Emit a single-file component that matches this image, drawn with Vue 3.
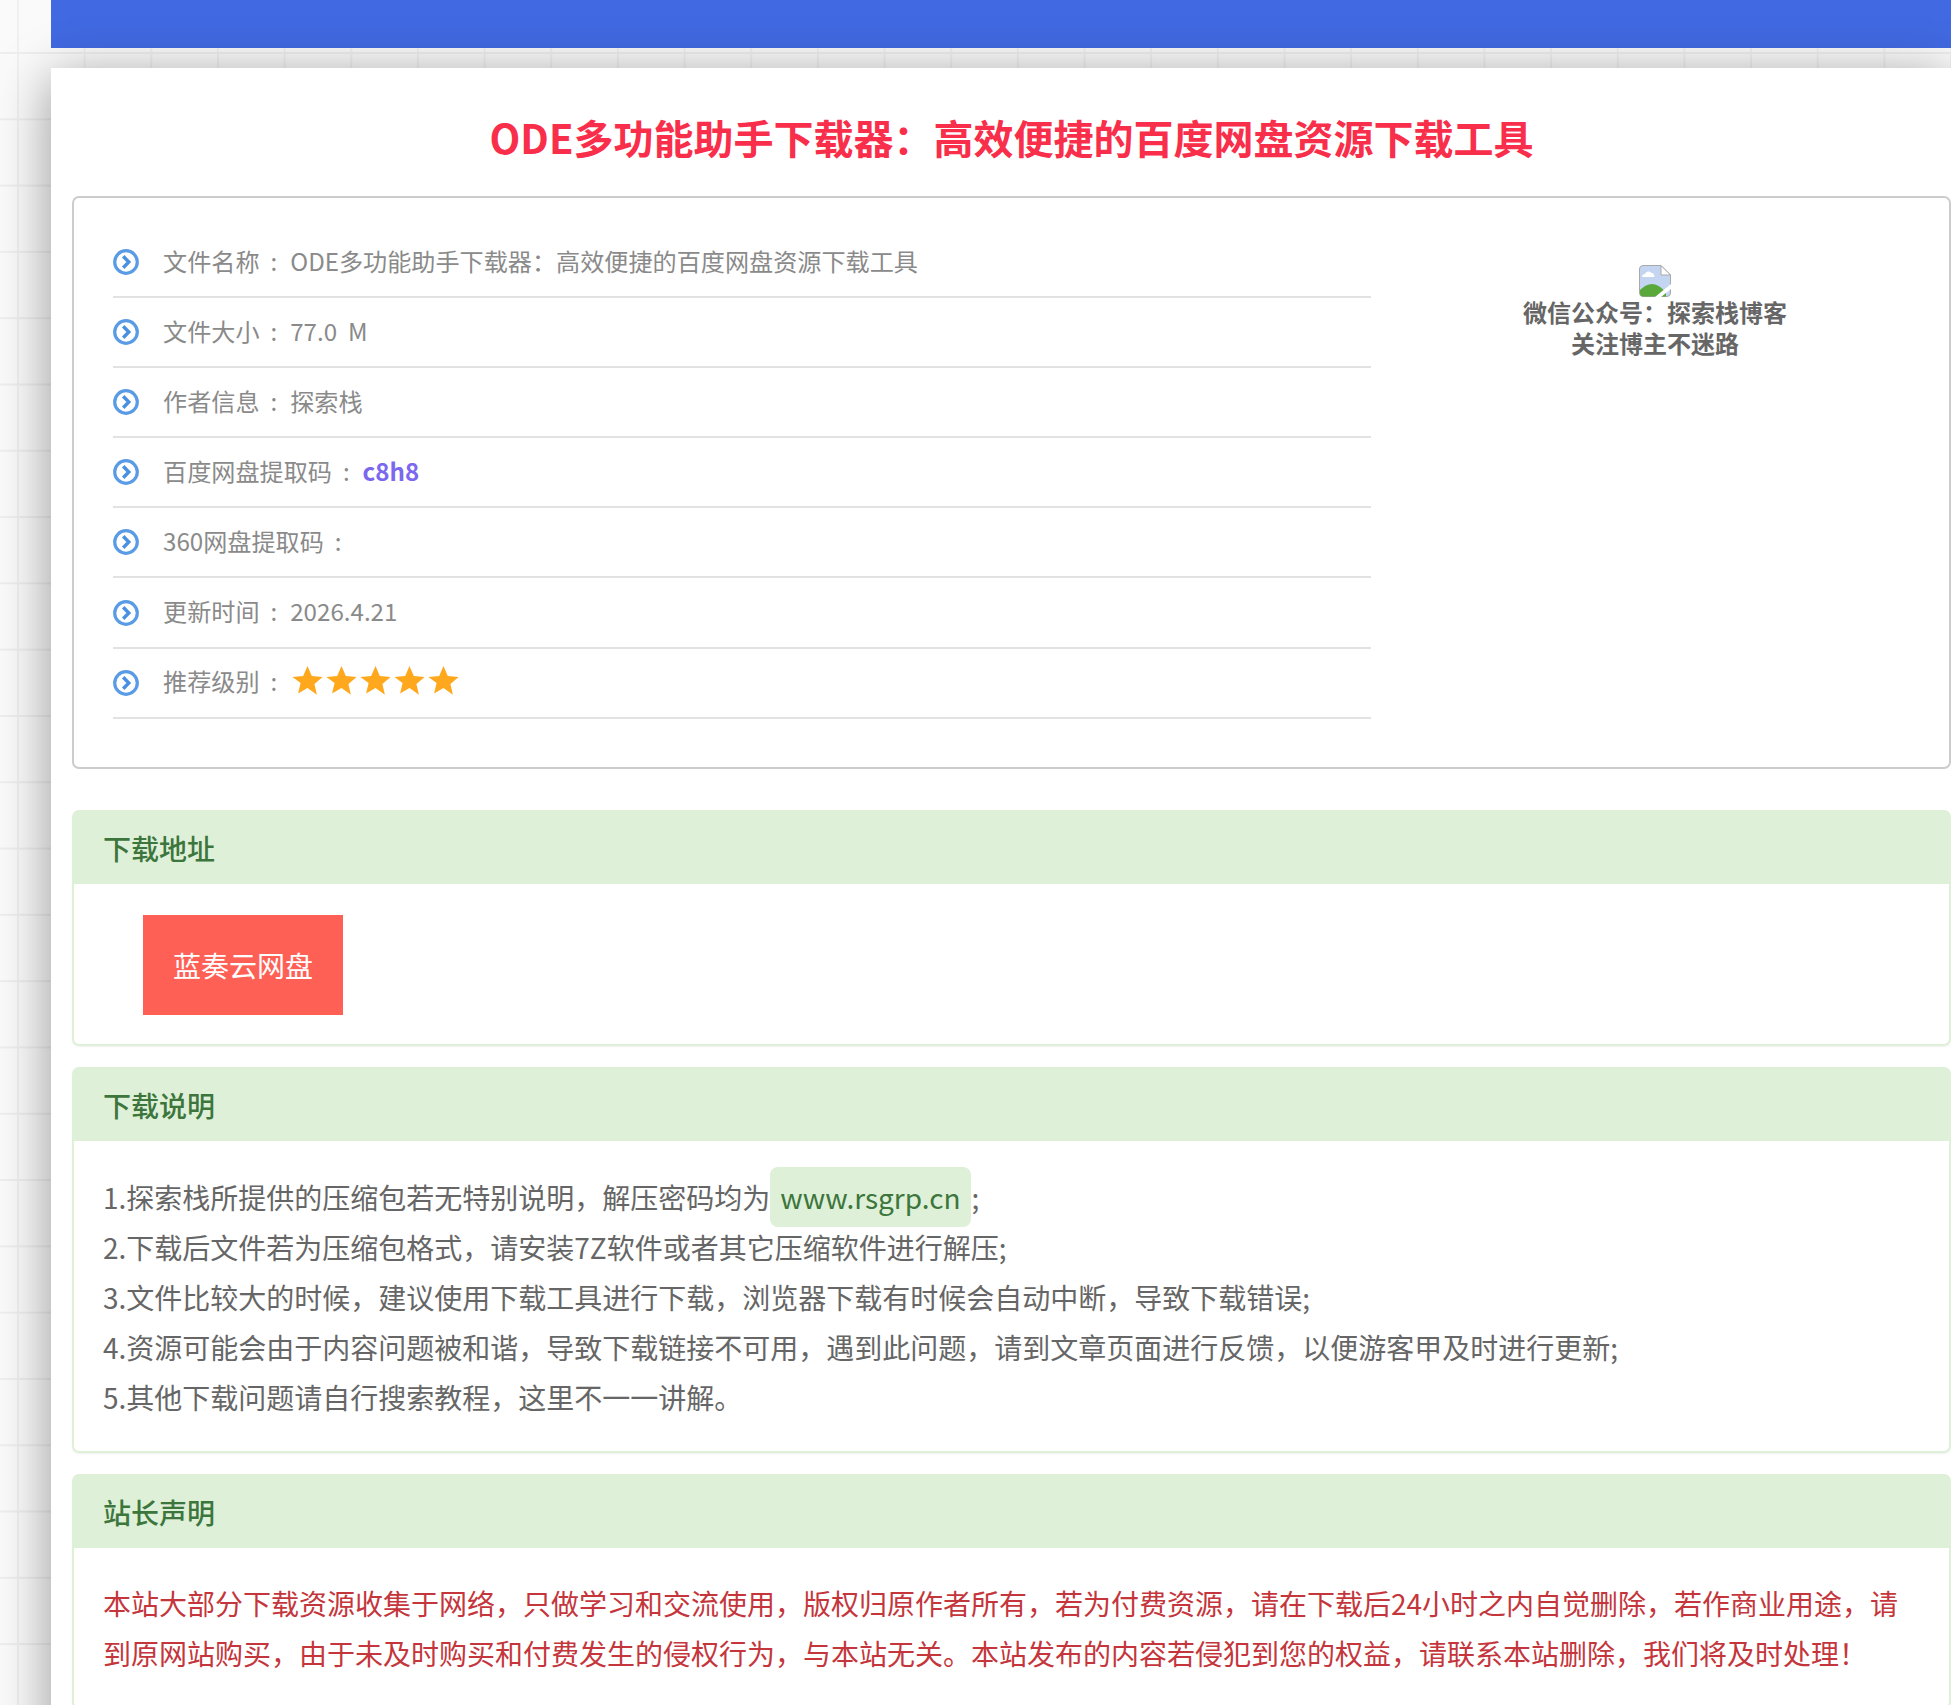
<template>
  <div class="page">
    <div class="topbar"></div>
    <div class="panel">
      <h1 class="title">{{ title }}</h1>

      <div class="info-card">
        <ul class="info-list">
          <li v-for="row in rows" :key="row.label" class="info-row">
            <svg class="row-icon" viewBox="0 0 26 26">
              <circle cx="13" cy="13" r="11.3" fill="none" stroke="#5a9be6" stroke-width="3.2" />
              <path d="M10.200 7.200 15.800 13l-5.600 5.800" fill="none" stroke="#4a90e2" stroke-width="3.4" />
            </svg>
            <span class="row-label">{{ row.label }}</span>
            <span class="row-colon">:</span>
            <span v-if="row.code" class="row-code">{{ row.code }}</span>
            <span v-else-if="row.stars" class="row-stars">
              <svg v-for="n in row.stars" :key="n" class="star" viewBox="0 0 30 30">
                <path d="M15 1l4.200 9.600 10.400 1-7.900 6.900 2.400 10.200L15 22.300 5.900 27.700l2.400-10.200L.4 11.600l10.400-1z" fill="#ffa81e" />
              </svg>
            </span>
            <span v-else class="row-value">{{ row.value }}</span>
          </li>
        </ul>
        <div class="qr-box">
          <svg class="broken-img" viewBox="0 0 32 32">
            <path d="M4 .5h18L31.500 10V28a3.500 3.500 0 0 1-3.500 3.500H4A3.500 3.500 0 0 1 .5 28V4A3.500 3.500 0 0 1 4 .5z" fill="#c3d5f0" stroke="#a9a9a9" />
            <path d="M22 .5V10h9.500z" fill="#fff" stroke="#a9a9a9" />
            <path d="M3 12c0-2 1.500-3 3-3 .8-3 5-3.500 6.500-1 2 0 3 1.800 3 4z" fill="#fff" />
            <path d="M1 28v-3c4-4 8-6 12-6s10 3 14 9v3.500H4A3 3 0 0 1 1 28z" fill="#5aa83c" />
            <path d="M16 32 32 19v5l-10 8z" fill="#fff" />
          </svg>
          <div class="qr-text">微信公众号：探索栈博客<br />关注博主不迷路</div>
        </div>
      </div>

      <section class="box box-first">
        <div class="box-head">下载地址</div>
        <div class="box-body btn-body">
          <a class="dl-btn">蓝奏云网盘</a>
        </div>
      </section>

      <section class="box">
        <div class="box-head">下载说明</div>
        <div class="box-body text-body">
          <div>1.探索栈所提供的压缩包若无特别说明，解压密码均为<span class="chip">www.rsgrp.cn</span>;</div>
          <div>2.下载后文件若为压缩包格式，请安装7Z软件或者其它压缩软件进行解压;</div>
          <div>3.文件比较大的时候，建议使用下载工具进行下载，浏览器下载有时候会自动中断，导致下载错误;</div>
          <div>4.资源可能会由于内容问题被和谐，导致下载链接不可用，遇到此问题，请到文章页面进行反馈，以便游客甲及时进行更新;</div>
          <div>5.其他下载问题请自行搜索教程，这里不一一讲解。</div>
        </div>
      </section>

      <section class="box">
        <div class="box-head">站长声明</div>
        <div class="box-body text-body notice">
          本站大部分下载资源收集于网络，只做学习和交流使用，版权归原作者所有，若为付费资源，请在下载后24小时之内自觉删除，若作商业用途，请到原网站购买，由于未及时购买和付费发生的侵权行为，与本站无关。本站发布的内容若侵犯到您的权益，请联系本站删除，我们将及时处理！
        </div>
      </section>
    </div>
  </div>
</template>

<script setup>
const title = 'ODE多功能助手下载器：高效便捷的百度网盘资源下载工具'

const rows = [
  { label: '文件名称', value: title },
  { label: '文件大小', value: '77.0\u00a0\u00a0M' },
  { label: '作者信息', value: '探索栈' },
  { label: '百度网盘提取码', code: 'c8h8' },
  { label: '360网盘提取码', value: '' },
  { label: '更新时间', value: '2026.4.21' },
  { label: '推荐级别', stars: 5 }
]
</script>

<style>
body { margin: 0; }
</style>

<style scoped>
.page {
  height: 1705px;
  overflow: hidden;
  padding-left: 51px;
  box-sizing: border-box;
  font-family: "Noto Sans CJK SC", "Noto Sans", sans-serif;
  background-color: #fafafa;
  background-image: linear-gradient(#eeeeee 2px, transparent 2px), linear-gradient(90deg, #f0f0f0 2px, transparent 2px);
  background-size: 66.67px 66.3px;
  background-position: 17px 52px;
}
.topbar { height: 48px; background: #4169e1; }
.panel {
  position: relative;
  margin-top: 20px;
  height: 1700px;
  padding-left: 21px;
  background: #fff;
  box-shadow: 0 10px 50px rgba(0, 0, 0, 0.4);
}
.title {
  margin: 0;
  height: 128px;
  box-sizing: border-box;
  font-size: 40px;
  line-height: 139px;
  font-weight: 700;
  text-align: center;
  color: #f82e4a;
}
.info-card {
  display: flex;
  height: 573px;
  box-sizing: border-box;
  padding: 30px 10px 0 39px;
  border: 2px solid #ccc;
  border-radius: 7px;
}
.info-list { width: 1258px; margin: 0; padding: 0; list-style: none; }
.info-row {
  display: flex;
  align-items: center;
  height: 70.1px;
  box-sizing: border-box;
  border-bottom: 2px solid #e2e2e2;
  font-size: 24.13px;
  color: #8a8a8a;
}
.row-icon { width: 26px; height: 26px; margin-right: 24px; flex: none; }
.row-label, .row-colon, .row-code, .row-value { padding-bottom: 4px; }
.row-colon { margin: 0 13px 0 11px; }
.row-code { font-weight: 700; color: #7b68ee; }
.row-stars { display: flex; gap: 3px; margin: -4px 0 0 2px; }
.star { width: 31px; height: 31px; }
.qr-box { flex: 1; padding-top: 37px; text-align: center; }
.broken-img { display: block; width: 32px; height: 32px; margin: 0 auto; }
.qr-text { margin-top: -1px; font-size: 24px; line-height: 31px; font-weight: 700; color: #666; }
.box {
  margin-top: 21px;
  border: 2px solid #dff0d8;
  border-radius: 7px;
  box-shadow: 0 1px 2px rgba(0, 0, 0, 0.06);
}
.box-first { margin-top: 41px; }
.box-head {
  height: 72px;
  padding: 0 29px;
  background: #dff0d8;
  font-size: 28px;
  font-weight: 500;
  line-height: 72px;
  color: #3c763d;
}
.box-body { padding: 30px 29px; }
.btn-body { padding: 31px 29px 29px; }
.dl-btn {
  display: block;
  width: 200px;
  height: 100px;
  margin-left: 40px;
  background: #ff6056;
  color: #fff;
  font-size: 28px;
  line-height: 100px;
  text-align: center;
}
.text-body { padding-top: 31px; padding-bottom: 29px; font-size: 28px; line-height: 50px; color: #666; }
.chip {
  margin: 0 1px 0 0;
  padding: 10px;
  border-radius: 8px;
  background: #dff0d8;
  color: #3c763d;
}
.notice { padding-top: 30px; color: #c4363c; }
</style>
